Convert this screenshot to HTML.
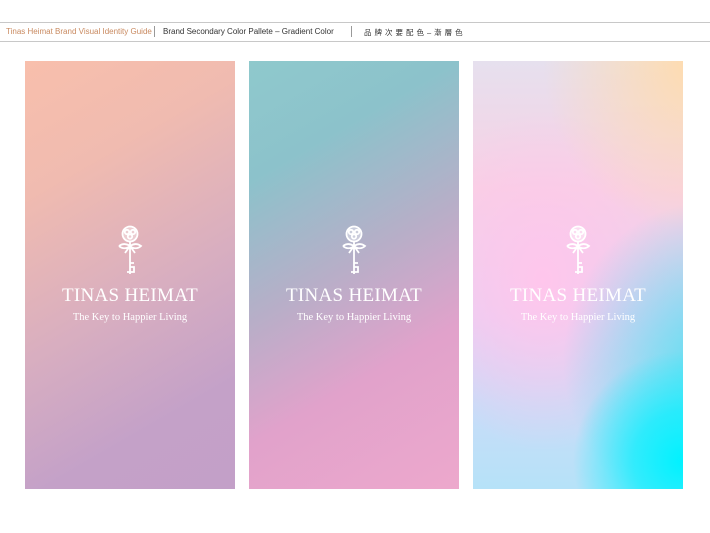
<!DOCTYPE html>
<html><head><meta charset="utf-8"><style>
body{margin:0;width:710px;height:533px;background:#fff;position:relative;overflow:hidden;font-family:"Liberation Sans","Noto Sans CJK SC",sans-serif}
.l{position:absolute;left:0;width:710px;height:1px;background:#c8c8c8}
.h{position:absolute;top:27px;font-size:8px;white-space:nowrap}
.p{position:absolute;top:61px;width:210px;height:428px}
.k{position:absolute;left:91px;top:225px}
.t{position:absolute;left:0;width:210px;text-align:center;color:#fff;font-family:"Liberation Serif",serif}
.t1{font-size:19px;letter-spacing:0.3px}
.t2{font-size:10.5px}
</style></head><body>
<div class="l" style="top:22px"></div><div class="l" style="top:41px"></div>
<div class="h" style="left:6px;color:#c98a60">Tinas Heimat Brand Visual Identity Guide</div>
<div style="position:absolute;left:154px;top:26px;width:1px;height:11px;background:#999"></div>
<div class="h" style="left:163px;color:#333">Brand Secondary Color Pallete – Gradient Color</div>
<div style="position:absolute;left:351px;top:26px;width:1px;height:11px;background:#999"></div>
<div class="h" style="left:364px;color:#333;letter-spacing:3px;font-size:7.5px">品牌次要配色–漸層色</div>

<div class="p" style="left:25px;background:linear-gradient(150deg,#f8bfac 0%,#f0bbb0 25%,#d8aec0 55%,#c4a1c8 80%,#c3a0c8 100%)"></div>
<div class="p" style="left:249px;background:linear-gradient(150deg,#8fc9cc 0%,#8cc2cb 22%,#b8aec8 48%,#e1a2cb 70%,#eda8cc 100%)"></div>
<div class="p" style="left:473px;background:
radial-gradient(ellipse 110px 110px at 210px 400px,#00f2ff 0%,rgba(0,240,255,0.7) 45%,rgba(0,240,255,0) 100%),
radial-gradient(ellipse 150px 160px at 240px 300px,rgba(70,225,240,0.85) 0%,rgba(70,225,240,0) 100%),
radial-gradient(ellipse 150px 170px at 220px 0px,#ffdcae 0%,rgba(255,215,175,0) 100%),
radial-gradient(ellipse 130px 170px at 70px 220px,#ffc6ec 0%,rgba(255,198,236,0) 100%),
linear-gradient(180deg,#e6e0ee 0%,#f8d0e4 30%,#e6d0f4 60%,#c8dcf8 80%,#b6e2f8 100%)"></div>

<script>
const key=`<svg width="28" height="52" viewBox="0 0 28 52" fill="none" stroke="#fff" stroke-width="1.8"><circle cx="14" cy="9" r="7.5" fill="rgba(255,255,255,0.35)"/><circle cx="11" cy="7" r="2.2"/><circle cx="17" cy="7" r="2.2"/><circle cx="14" cy="11.5" r="2.2"/><path d="M14 16.5v3M3 21c4-3 8-2 11 0c3-2 7-3 11 0c-3 3-8 3-11 0c-3 3-8 3-11 0M9 28l5-7 5 7M14 19v30M14 38h4M14 42h4v5h-7"/></svg>`;
[25,249,473].forEach(x=>{document.body.insertAdjacentHTML('beforeend',`<div style="position:absolute;left:${x}px;top:0;width:210px"><div class="k" style="left:91px">${key}</div><div class="t t1" style="top:285px">TINAS HEIMAT</div><div class="t t2" style="top:312px">The Key to Happier Living</div></div>`)});
</script>
</body></html>
